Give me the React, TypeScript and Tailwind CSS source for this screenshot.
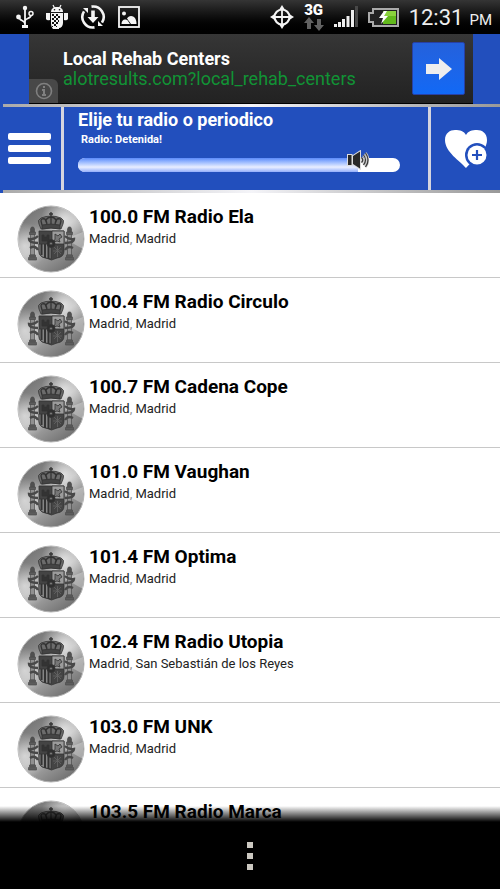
import { useId, useState } from "react";

type Station = { name: string; place: string; city: string };

const stations: Station[] = [
  { name: "100.0 FM Radio Ela", place: "Madrid", city: "Madrid" },
  { name: "100.4 FM Radio Circulo", place: "Madrid", city: "Madrid" },
  { name: "100.7 FM Cadena Cope", place: "Madrid", city: "Madrid" },
  { name: "101.0 FM Vaughan", place: "Madrid", city: "Madrid" },
  { name: "101.4 FM Optima", place: "Madrid", city: "Madrid" },
  { name: "102.4 FM Radio Utopia", place: "Madrid", city: "San Sebastián de los Reyes" },
  { name: "103.0 FM UNK", place: "Madrid", city: "Madrid" },
  { name: "103.5 FM Radio Marca", place: "Madrid", city: "Madrid" },
];

function UsbIcon() {
  return (
    <svg width="18" height="24" viewBox="0 0 18 24" fill="none" stroke="#f4f4f4" strokeWidth="1.8">
      <path d="M9 3v18M9 19c0-4-6-3-6-7M9 16c0-3 6-2 6-6" />
      <circle cx="9" cy="3" r="2.200" fill="#f4f4f4" stroke="none" />
      <circle cx="2.500" cy="12" r="2.400" fill="#f4f4f4" stroke="none" />
      <circle cx="15" cy="8.500" r="2" strokeWidth="1.500" />
      <path d="M6 21.500h6" strokeWidth="3" />
    </svg>
  );
}

function AndroidIcon() {
  return (
    <svg width="22" height="26" viewBox="0 0 22 26" fill="#f4f4f4">
      <path d="M5 8c0-3 2-5 6-5s6 2 6 5z" />
      <path d="M7 1l1.500 3M15 1l-1.500 3" stroke="#f4f4f4" strokeWidth="1.200" />
      <path d="M5 9h12v10c0 3-2 5-4 5v1h-6c-1-1-2-3-2-6z" />
      <path d="M0 9h4v7q-3 1-4-1zM18 9h4v6q-1 2-4 1z" />
      <circle cx="8.500" cy="5.800" r=".8" fill="#111" />
      <circle cx="13.500" cy="5.800" r=".8" fill="#111" />
      <path
        d="M6 10h2v2h-2zM10 10h2v2h-2zM8 12h2v2h-2zM12 12h2v2h-2zM6 14h2v2h-2zM10 14h2v2h-2zM8 16h2v2h-2zM12 16h1v2h-1zM6 18h2v2h-2zM10 18h2v2h-2zM8 20h2v2h-2zM6 22h1v1h-1zM10 22h1v1h-1z"
        fill="#111"
      />
    </svg>
  );
}

function SyncIcon() {
  return (
    <svg width="26" height="26" viewBox="0 0 26 26" fill="none" stroke="#f4f4f4" strokeWidth="2.600">
      <path d="M11.500 2.600a10.500 10.500 0 0 1 10.500 16M14.500 23.400a10.500 10.500 0 0 1-10.500-16" />
      <path d="M3 4h5v5zM23 22h-5v-5z" fill="#f4f4f4" stroke="none" />
      <path d="M13 6.500v8" strokeWidth="3.600" />
      <path d="M7.500 13h11l-5.500 6z" fill="#f4f4f4" stroke="none" />
    </svg>
  );
}

function PictureIcon() {
  return (
    <svg width="22" height="22" viewBox="0 0 22 22" fill="#f4f4f4">
      <rect x="1" y="1" width="20" height="20" fill="none" stroke="#f4f4f4" strokeWidth="1.800" />
      <circle cx="6" cy="7.500" r="2" />
      <path d="M3.500 18c0-3 1.500-4.500 3.500-4.500 1.500 0 2.500.500 3 1.500l2 3z" />
      <path d="M9 12.500c1-1.500 2-2.500 4-2.500 4 0 5.500 4 5.500 8h-5.500z" />
    </svg>
  );
}

function GpsIcon() {
  return (
    <svg width="24" height="26" viewBox="0 0 24 26" fill="none" stroke="#f4f4f4" strokeWidth="1.800">
      <circle cx="12" cy="13" r="7.500" strokeWidth="2.200" />
      <path d="M12 3v20M2 13h20" />
      <path d="M12 1l2.500 4h-5zM12 25l2.500-4h-5zM0 13l4-2.500v5zM24 13l-4-2.500v5z" fill="#f4f4f4" stroke="none" />
    </svg>
  );
}

function DataIcon() {
  return (
    <span className="flex w-5 flex-col items-center">
      <span className="text-[15px] font-black leading-3.5 text-white">3G</span>
      <svg width="20" height="14" viewBox="0 0 20 14" fill="#626262">
        <path d="M5 0l5 6h-3v6h-4v-6h-3zM13 2h4v6h3l-5 6-5-6h3z" />
      </svg>
    </span>
  );
}

function SignalIcon() {
  return (
    <svg width="24" height="22" viewBox="0 0 24 22" fill="#eee">
      <path d="M0 18h3v3h-3zM4 16h3v5h-3zM8 13h3v8h-3zM12.500 10h3v11h-3zM17 4h3v17h-3z" />
      <path d="M21 0h3v21h-3z" fill="#484848" />
    </svg>
  );
}

function BatteryIcon() {
  return (
    <svg width="31" height="19" viewBox="0 0 31 19">
      <path d="M5 1h25v17h-25v-4h-4v-9h4z" fill="#222" stroke="#aaa" strokeWidth="2" />
      <path d="M15 3h13v13h-13z" fill="#62b91c" />
      <path d="M15 3h13v5h-13z" fill="#8bd33d" />
      <path d="M16 3l-5 7h4l-2 6 7-8h-4l3-5z" fill="#fff" />
    </svg>
  );
}

function StatusBar() {
  return (
    <div className="flex h-[34px] shrink-0 items-center justify-between bg-linear-to-b from-[#353535] to-black pl-4 pr-2">
      <div className="flex items-center gap-3">
        <UsbIcon />
        <AndroidIcon />
        <SyncIcon />
        <PictureIcon />
      </div>
      <div className="flex items-center gap-2.5">
        <GpsIcon />
        <DataIcon />
        <SignalIcon />
        <BatteryIcon />
        <div className="flex items-baseline gap-1.5 pt-0.5 text-[#eee]">
          <span className="text-[22px] leading-8">12:31</span>
          <span className="text-[15px]">PM</span>
        </div>
      </div>
    </div>
  );
}

function AdBanner() {
  return (
    <section className="relative mr-[27px] ml-[29px] flex h-[70px] shrink-0 items-center justify-between border-b border-black bg-linear-to-b from-[#363636] to-[#222] pr-2 pl-[34px]">
      <div className="text-lg leading-5 text-white">
        <p className="font-bold">Local Rehab Centers</p>
        <a href="#ad" className="block text-[#119335]">
          alotresults.com?local_rehab_centers
        </a>
      </div>
      <button
        type="button"
        aria-label="Abrir anuncio"
        className="flex size-[53px] items-center justify-center rounded-xs border border-[#2740a5] bg-linear-to-b from-[#2461dc] to-[#1169f5]"
      >
        <svg width="26" height="22" viewBox="0 0 26 22" fill="#eee">
          <path d="M0 6h13v-6l13 11-13 11v-6h-13z" />
        </svg>
      </button>
      <button
        type="button"
        aria-label="Información del anuncio"
        className="absolute bottom-0 left-0 flex h-6 w-[29px] items-center justify-center rounded-tr-md bg-[#484848]"
      >
        <svg width="18" height="18" viewBox="0 0 18 18" fill="none" stroke="#808080" strokeWidth="2">
          <circle cx="9" cy="9" r="7.500" strokeWidth="1.600" />
          <path d="M9 4v2M7 8h2v5M7 13h4" />
        </svg>
      </button>
    </section>
  );
}

function Rule() {
  return <div className="ml-[3px] h-[3px] shrink-0 bg-linear-to-r from-[#aaa] via-[#f4f4f8] to-[#999]" />;
}

function SpeakerIcon() {
  return (
    <svg width="22" height="20" viewBox="0 0 22 20" className="block">
      <path d="M1 5h3.500v10h-3.500zM6 6l7-4.500v17l-7-4.500z" stroke="#ddd" strokeWidth="2" />
      <path d="M1 5h3.500v10h-3.500zM6 6l7-4.500v17l-7-4.500z" fill="#292929" />
      <g fill="none">
        <path d="M14.500 7.500q2.500 2.500 0 5M16.500 5q4 5 0 10M18.500 3q5 7 0 14" stroke="#ccc" strokeWidth="2.600" />
        <path d="M14.500 7.500q2.500 2.500 0 5M16.500 5q4 5 0 10M18.500 3q5 7 0 14" stroke="#393939" strokeWidth="1.200" />
      </g>
    </svg>
  );
}

function Volume() {
  const [volume, setVolume] = useState(87);
  return (
    <div className="relative h-3.5 rounded-full bg-white">
      <div
        className="h-full rounded-l-full bg-linear-to-b from-[#5c8bfa] via-[#e9eeff] via-65% to-[#94aefa]"
        style={{ width: `${volume}%` }}
      />
      <div className="pointer-events-none absolute -top-2 -translate-x-1/2" style={{ left: `${volume}%` }}>
        <SpeakerIcon />
      </div>
      <input
        type="range"
        aria-label="Volumen"
        min={0}
        max={100}
        value={volume}
        onChange={(e) => setVolume(Number(e.target.value))}
        className="absolute inset-0 h-full w-full cursor-pointer appearance-none bg-transparent [&::-webkit-slider-thumb]:size-5 [&::-webkit-slider-thumb]:appearance-none"
      />
    </div>
  );
}

function Header() {
  return (
    <header className="flex h-[83px] shrink-0 text-white">
      <button
        type="button"
        aria-label="Menú"
        className="flex w-16 shrink-0 flex-col items-start justify-center gap-[5px] border-r-3 border-[#d5d5df] pl-2"
      >
        <span className="h-[7px] w-[43px] rounded-xs bg-white" />
        <span className="h-[7px] w-[43px] rounded-xs bg-white" />
        <span className="h-[7px] w-[43px] rounded-xs bg-white" />
      </button>
      <div className="min-w-0 flex-1 pt-[3px] pr-7 pl-3.5">
        <h1 className="text-lg leading-5 font-bold">Elije tu radio o periodico</h1>
        <p className="mb-2 pl-[3px] text-[11px] leading-5 font-bold">Radio: Detenida!</p>
        <Volume />
      </div>
      <button
        type="button"
        aria-label="Añadir a favoritos"
        className="flex w-[72px] shrink-0 items-center justify-center border-l-3 border-[#d5d5df]"
      >
        <svg width="42" height="40" viewBox="0 0 42 40">
          <path d="M21 39C15 32 0 23 0 11 0 4 5 1 10 1c5 0 9 1 11 5 2-4 6-5 11-5 5 0 10 3 10 10 0 12-15 21-21 28z" fill="#fff" />
          <circle cx="32" cy="26" r="12" fill="#224fbd" />
          <circle cx="32" cy="26" r="9.500" fill="#fff" />
          <path d="M32 21v10M27 26h10" stroke="#224fbd" strokeWidth="2.200" />
        </svg>
      </button>
    </header>
  );
}

function Emblem() {
  const id = useId();
  const metal = `${id}metal`;
  const shine = `${id}shine`;
  const glow = `${id}glow`;
  return (
    <svg width="68" height="68" viewBox="0 0 68 68" className="shrink-0" aria-hidden="true">
      <defs>
        <linearGradient id={metal} x1=".1" y1="0" x2=".8" y2="1">
          <stop offset="0" stopColor="#6c6c6c" />
          <stop offset=".25" stopColor="#858585" />
          <stop offset=".5" stopColor="#b2b2b2" />
          <stop offset=".75" stopColor="#8e8e8e" />
          <stop offset="1" stopColor="#696969" />
        </linearGradient>
        <radialGradient id={shine} cx=".7" cy=".2" r=".35">
          <stop offset="0" stopColor="#fff" stopOpacity=".65" />
          <stop offset="1" stopColor="#fff" stopOpacity="0" />
        </radialGradient>
        <radialGradient id={glow} cx=".1" cy=".6" r=".35">
          <stop offset="0" stopColor="#fff" stopOpacity=".55" />
          <stop offset="1" stopColor="#fff" stopOpacity="0" />
        </radialGradient>
      </defs>
      <circle cx="34" cy="34" r="33" fill={`url(#${metal})`} stroke="#b4b4b4" />
      <circle cx="34" cy="34" r="33" fill={`url(#${shine})`} />
      <circle cx="34" cy="34" r="33" fill={`url(#${glow})`} />
      <path d="M66 27L48 34 66 44z" fill="#eee" opacity=".35" />
      <g fill="#444" stroke="#333" strokeWidth=".8">
        <path d="M24 24l-2-5q-2-4 2-6 5-2 10-2t10 2q4 2 2 6l-2 5q-10-2-20 0z" fill="#6c6c6c" />
        <path
          d="M25 20l-1-4q0-3 4-2l2 5M43 20l1-4q0-3-4-2l-2 5M30 19l-1-4q2-3 5-3t5 3l-1 4M34 7v12M32 9h4"
          fill="none"
          strokeWidth="1.300"
        />
        <path d="M25 20q9-2 18 0v4q-9-2-18 0z" />
        <path d="M22 26h25v20q0 6-7 7l-5.500 2-5.500-2q-7-1-7-7z" />
        <path d="M35 26h12v13h-12z" fill="#9b9b9b" />
        <path d="M22 39h12v15l-5-1q-7-1-7-7z" fill="#858585" />
        <path d="M24.500 39v11M28 39v14M31.500 39v15" strokeWidth="2" />
        <path d="M25 36v-6h2v2h3v-2h2v6z" fill="#333" />
        <path d="M38 29l3 2 2-2 2 3-3 2 1 3-3-1-3 1 1-3z" fill="#777" />
        <path d="M37 42l7 7M44 42l-7 7M40.500 41v11M36 46h9" stroke="#666" />
        <circle cx="34" cy="38.500" r="4" fill="#2f2f2f" />
        <circle cx="34" cy="38.500" r="1.500" fill="#777" />
      </g>
      {[15.5, 52.5].map((x) => (
        <g key={x} stroke="#4c4c4c" strokeWidth=".7" fill="#909090">
          <path d={`M${x - 2} 29h4v21h-4z`} />
          <path d={`M${x - 3} 27h6v2.500h-6zM${x - 3} 50h6v2h-6zM${x - 4} 52.500h8v2.500h-8z`} fill="#5c5c5c" />
          <path d={`M${x - 2} 24l1-2h2l1 2v3h-4z`} fill="#505050" />
        </g>
      ))}
      <path
        d="M21 31q-4 4-9 3 0 4 9 4M13 43q5-3 8 2M48 31q4 4 9 3 0 4-9 4M56 43q-5-3-8 2"
        fill="none"
        stroke="#484848"
        strokeWidth="2.400"
      />
    </svg>
  );
}

function StationRow({ name, place, city }: Station) {
  return (
    <li className="h-[85px] border-b border-[#c8c8c8]">
      <button type="button" className="flex h-full w-full items-start gap-1 pt-3 pl-[17px] text-left">
        <Emblem />
        <span className="text-black">
          <span className="block text-[19px] leading-6 font-bold">{name}</span>
          <span className="block text-[13px] leading-5 text-[#222]">
            {place}
            <span className="text-[#999]">,</span> {city}
          </span>
        </span>
      </button>
    </li>
  );
}

function NavBar() {
  return (
    <nav className="relative flex h-[67px] shrink-0 items-center justify-center bg-black">
      <div className="pointer-events-none absolute inset-x-0 bottom-full h-4 bg-linear-to-b from-transparent to-black" />
      <button type="button" aria-label="Más opciones" className="flex w-10 flex-col items-center gap-[5px]">
        <span className="size-1.5 bg-[#cbc8c1]" />
        <span className="size-1.5 bg-[#cbc8c1]" />
        <span className="size-1.5 bg-[#cbc8c1]" />
      </button>
    </nav>
  );
}

export default function App() {
  return (
    <div className="flex h-screen flex-col overflow-hidden bg-white font-[Roboto,sans-serif]">
      <StatusBar />
      <div className="flex shrink-0 flex-col bg-[#224fbd]">
        <AdBanner />
        <Rule />
        <Header />
        <Rule />
      </div>
      <main className="min-h-0 flex-1 overflow-y-auto [scrollbar-width:none]">
        <ul>
          {stations.map((station) => (
            <StationRow key={station.name} {...station} />
          ))}
        </ul>
      </main>
      <NavBar />
    </div>
  );
}
